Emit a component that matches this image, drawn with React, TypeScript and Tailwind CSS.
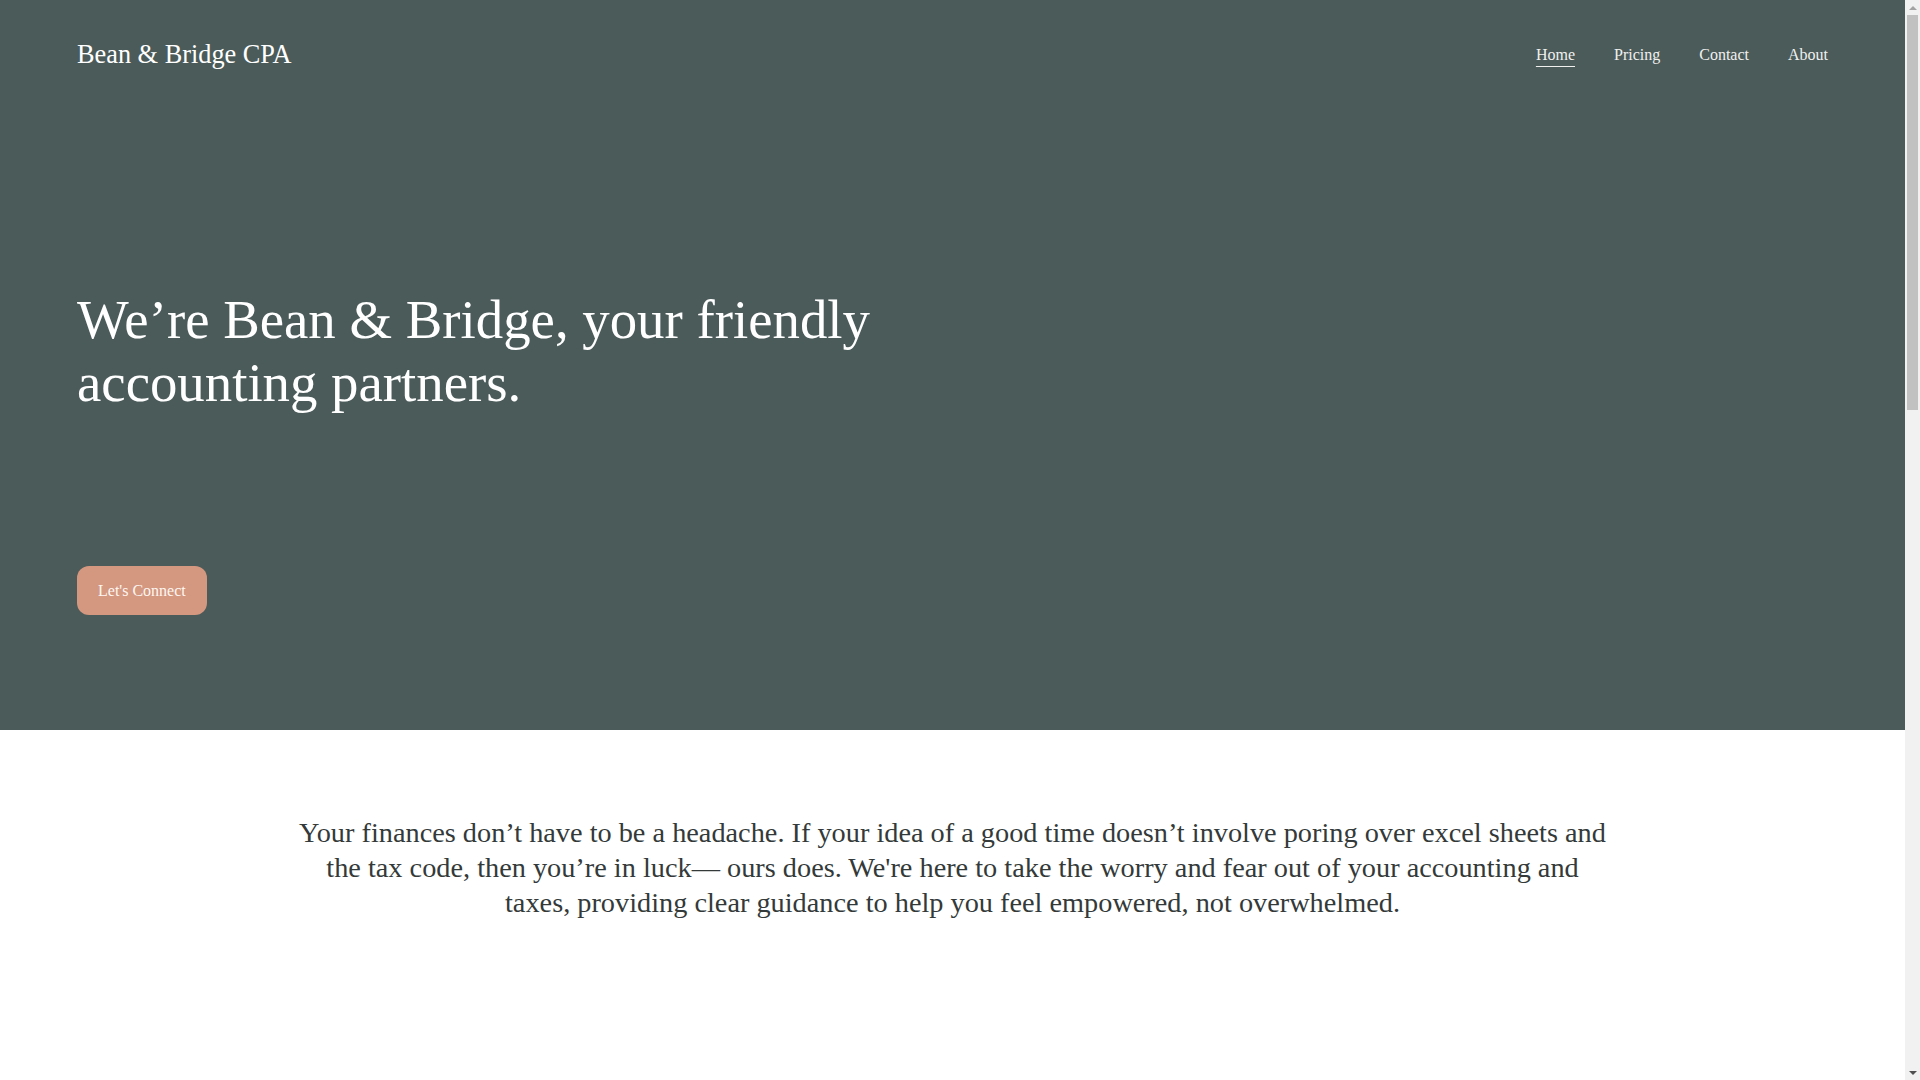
import React from 'react';

const navLinks = [
  { label: 'Home', active: true },
  { label: 'Pricing', active: false },
  { label: 'Contact', active: false },
  { label: 'About', active: false },
];

function Scrollbar() {
  return (
    <aside className="flex h-screen w-[15px] shrink-0 flex-col bg-[#f1f1f1]">
      <div className="flex h-[15px] items-center justify-center">
        <div className="h-0 w-0 border-x-[4px] border-b-[4px] border-x-transparent border-b-[#a3a3a3]" />
      </div>
      <div className="mx-[2px] h-[395px] bg-[#c1c1c1]" />
      <div className="flex-1" />
      <div className="flex h-[15px] items-center justify-center">
        <div className="h-0 w-0 border-x-[4px] border-t-[4px] border-x-transparent border-t-[#505050]" />
      </div>
    </aside>
  );
}

export default function App() {
  return (
    <div className="flex h-screen overflow-hidden bg-white font-['Liberation_Serif','Times_New_Roman',serif]">
      <main className="min-w-0 flex-1">
        <section className="bg-[#4b5b5a] px-[77px] pb-[115px]">
          <header className="flex h-[110px] items-center justify-between">
            <a href="#" className="text-[26.3px] leading-none text-white">
              Bean &amp; Bridge CPA
            </a>
            <nav className="flex items-center gap-[39px]">
              {navLinks.map((link) => (
                <a
                  key={link.label}
                  href="#"
                  className={
                    link.active
                      ? 'text-[16px] leading-none text-[#f0f0ef] underline decoration-1 underline-offset-[6px]'
                      : 'text-[16px] leading-none text-[#f0f0ef]'
                  }
                >
                  {link.label}
                </a>
              ))}
            </nav>
          </header>

          <div className="mt-[178px] max-w-[840px]">
            <h1 className="text-[54.8px] font-normal leading-[63px] text-white">
              We’re Bean &amp; Bridge, your friendly accounting partners.
            </h1>
          </div>

          <div className="mt-[152px]">
            <button className="h-[49px] rounded-[12px] bg-[#d4977f] px-[21px] text-[16px] text-[#fdf6f2]">
              Let's Connect
            </button>
          </div>
        </section>

        <section className="flex justify-center pt-[85px]">
          <p className="w-[1316px] text-center text-[28.3px] leading-[35px] text-[#333a39]">
            Your finances don’t have to be a headache. If your idea of a good time doesn’t involve
            poring over excel sheets and the tax code, then you’re in luck— ours does. We're here to
            take the worry and fear out of your accounting and taxes, providing clear guidance to help
            you feel empowered, not overwhelmed.
          </p>
        </section>
      </main>
      <Scrollbar />
    </div>
  );
}
